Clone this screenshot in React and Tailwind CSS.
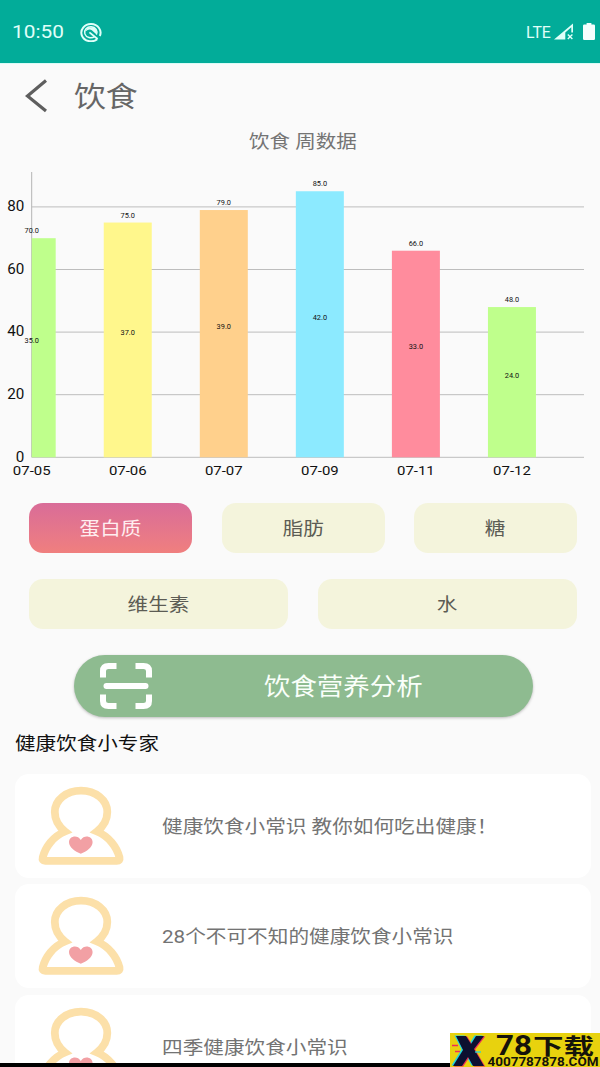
import clsx from 'clsx';

const bars = [
  { day: '07-05', total: 70, mid: 35, color: '#bfff8c' },
  { day: '07-06', total: 75, mid: 37, color: '#fff78c' },
  { day: '07-07', total: 79, mid: 39, color: '#ffd08c' },
  { day: '07-09', total: 85, mid: 42, color: '#8ceaff' },
  { day: '07-11', total: 66, mid: 33, color: '#ff8c9d' },
  { day: '07-12', total: 48, mid: 24, color: '#bfff8c' },
];

const articles = [
  '健康饮食小常识 教你如何吃出健康！',
  '28个不可不知的健康饮食小常识',
  '四季健康饮食小常识',
];

// all labels are set slightly wide
function Wide({ className, children }) {
  return (
    <span className={clsx('inline-block scale-x-[1.125] whitespace-nowrap', className)}>{children}</span>
  );
}

function StatusBar() {
  return (
    <div className="flex h-16 shrink-0 items-center border-b border-[#d9fbf6] bg-[#02ac99] pr-[5px] pl-3 text-[#e0fff9]">
      <Wide className="w-[54px] origin-left pt-0.5 text-[18.5px]">10:50</Wide>
      <svg viewBox="0 0 22 20" className="ml-[14px] h-5 w-[22px]" fill="none" stroke="currentColor">
        <path d="M17.2 17.2 A9.6 8.6 0 1 1 19.8 14" strokeWidth="2" />
        <path d="M14.6 14.6 A6.2 5.5 0 1 1 16.4 12.6" strokeWidth="1.4" />
        <path d="M5.4 9.4 A5.8 5.2 0 0 1 16.8 9.4 L16.6 12.6 L11.8 8.2 Q9 6.6 5.4 9.4 Z" fill="currentColor" stroke="none" />
        <path d="M9.4 10.4 L17.6 17" strokeWidth="1.8" />
      </svg>
      <span className="ml-auto inline-block w-[25px] origin-left scale-x-[0.99] pt-0.5 text-[16px]">LTE</span>
      <svg viewBox="0 0 20 17" className="ml-[3px] h-[17px] w-5" fill="currentColor">
        <path d="M0 16.5 L19 0.5 V9.5 H17.3 V4.2 L11.3 9.5 V16.5 Z" />
        <path d="M13.8 11.6 l4.6 4.4 M18.4 11.6 l-4.6 4.4" stroke="currentColor" strokeWidth="1.4" />
      </svg>
      <svg viewBox="0 0 12 17" className="ml-[9px] h-[17px] w-3" fill="#f4fffd">
        <path d="M3.6 0 H8.4 V1.6 H10.8 Q12 1.6 12 2.8 V15.8 Q12 17 10.8 17 H1.2 Q0 17 0 15.8 V2.8 Q0 1.6 1.2 1.6 H3.6 Z" />
      </svg>
    </div>
  );
}

function Label({ x, y, size, anchor = 'middle', children }) {
  return (
    <text transform={`translate(${x} ${y}) scale(1.1 1)`} fontSize={size} textAnchor={anchor} fill="#111">
      {children}
    </text>
  );
}

function Chart() {
  const base = 297.3;
  const unit = 3.13;

  return (
    <svg viewBox="0 0 600 330" className="h-[330px] w-[600px] shrink-0">
      <path d="M31.7 12 V297" stroke="#b4b4b4" />
      {[0, 20, 40, 60, 80].map((v) => (
        <g key={v}>
          <path d={`M31.5 ${base - v * unit} H584`} stroke="#bdbdbd" />
          <Label x={24.2} y={base - v * unit + 4.2} size={13.8} anchor="end">{v}</Label>
        </g>
      ))}
      {bars.map((b, i) => {
        const cx = 31.7 + i * 96.05;
        const left = i === 0 ? cx : cx - 24;
        const top = base - b.total * unit;
        return (
          <g key={b.day}>
            <rect x={left} y={top} width={cx + 24 - left} height={base - top} fill={b.color} />
            <Label x={cx} y={top - 5} size={6.7}>{b.total.toFixed(1)}</Label>
            <Label x={cx} y={(top + base) / 2 - 4.6} size={6.7}>{b.mid.toFixed(1)}</Label>
            <Label x={cx} y={314.6} size={13.6}>{b.day}</Label>
          </g>
        );
      })}
    </svg>
  );
}

function Nutrient({ active, children }) {
  return (
    <button
      className={clsx(
        'flex flex-1 items-center justify-center rounded-[14px] pt-0.5 text-[18.3px]',
        active ? 'bg-linear-to-b from-[#d96c98] to-[#f07f7e] text-[#ffeef0]' : 'bg-[#f4f4dc] text-[#5c5c54]'
      )}
    >
      <Wide>{children}</Wide>
    </button>
  );
}

function Person() {
  return (
    <svg viewBox="38 785 87 82" className="h-[82px] w-[87px] shrink-0">
      <path
        d="M65 831.5 C57.5 825.5 54.8 819 54.8 812 C54.8 799.8 66.5 790.6 81 790.6 S107.3 799.8 107.3 812 C107.3 819 104.5 825.5 97 831.5 C109 836.5 116.8 847 119.5 857.5 Q120.2 860.9 116.8 860.9 H45.2 Q41.8 860.9 42.7 857.5 C45.3 847 53 836.5 65 831.5 Z"
        fill="none"
        stroke="#fce0a9"
        strokeWidth="7.8"
      />
      <path
        d="M80.8 853.8 C75 851.5 69 847.5 69 842 C69 836 77.5 834 80.8 840 C84.1 834 92.6 836 92.6 842 C92.6 847.5 86.6 851.5 80.8 853.8 Z"
        fill="#f2a0a4"
      />
    </svg>
  );
}

function Watermark() {
  return (
    <div className="absolute right-0 bottom-0 flex h-[34px] w-[150px] bg-[#e8d20e] text-[#15130a]">
      <svg viewBox="0 0 36 34" className="h-[34px] w-9 shrink-0">
        <path d="M6 3 H16 L21 11 L26 3 H34 L24 16 L34 33 H23 L18 24 L12 33 H3 L13 17 Z" fill="#20d5e0" transform="translate(-1.5 -0.5)" />
        <path d="M6 3 H16 L21 11 L26 3 H34 L24 16 L34 33 H23 L18 24 L12 33 H3 L13 17 Z" fill="#ee2f55" transform="translate(1.2 0.5)" />
        <path d="M6 3 H16 L21 11 L26 3 H34 L24 16 L34 33 H23 L18 24 L12 33 H3 L13 17 Z" fill="#0c1030" />
        <path d="M2 12.5 H8 M5 18.5 H10" stroke="#ee2f55" strokeWidth="1.3" />
        <path d="M25 19 H31" stroke="#20d5e0" strokeWidth="1.3" />
      </svg>
      <svg viewBox="0 0 114 34" className="h-[34px] w-[114px]" fill="currentColor">
        <text x="10" y="22" fontSize="27" fontWeight="700" textLength="36" lengthAdjust="spacingAndGlyphs">78</text>
        <text x="47" y="20.6" fontSize="22" fontWeight="700" textLength="61" lengthAdjust="spacingAndGlyphs">下载</text>
        <text x="1.5" y="33" fontSize="13.5" fontWeight="700" fontFamily="Roboto, sans-serif" textLength="111" lengthAdjust="spacing">4007787878.COM</text>
      </svg>
    </div>
  );
}

export default function App() {
  return (
    <div className="relative flex h-[1067px] w-[600px] flex-col overflow-hidden bg-[#fafafa] font-[Roboto,'Noto_Sans_CJK_SC',sans-serif]">
      <StatusBar />

      <header className="flex h-16 shrink-0 items-center pl-[25px] text-[#666]">
        <svg viewBox="0 0 22 34" className="h-[34px] w-[22px]" fill="none" stroke="#5e5e5e" strokeWidth="3.2">
          <path d="M21 1.5 L2.5 17 L21 32" />
        </svg>
        <Wide className="ml-[27px] origin-left pt-1 text-[28.3px]">饮食</Wide>
      </header>

      <h2 className="flex h-8 shrink-0 items-center justify-center pb-1 pl-[6px] text-[18.3px] text-[#747474]">
        <Wide>饮食 周数据</Wide>
      </h2>

      <Chart />

      <section className="flex shrink-0 flex-col gap-[26px] px-[29px] pt-[12.5px] pr-[23px]">
        <div className="flex h-[50px] gap-[29.5px]">
          <Nutrient active>蛋白质</Nutrient>
          <Nutrient>脂肪</Nutrient>
          <Nutrient>糖</Nutrient>
        </div>
        <div className="flex h-[50px] gap-[29.5px]">
          <Nutrient>维生素</Nutrient>
          <Nutrient>水</Nutrient>
        </div>
      </section>

      <button className="mt-[26.5px] ml-[73.5px] flex h-[62px] w-[459.5px] shrink-0 items-center rounded-full bg-[#8ebb90] pl-[26px] text-[#fafffa] shadow-[0_1px_3px_rgba(0,0,0,0.25)]">
        <svg viewBox="0 0 52 46" className="h-[46px] w-[52px]" fill="none" stroke="white" strokeWidth="6">
          <path d="M3 14.5 V8 Q3 3 8.5 3 H16.5 M35.5 3 H43.5 Q49 3 49 8 V14.5 M49 31.5 V38 Q49 43 43.5 43 H35.5 M16.5 43 H8.5 Q3 43 3 38 V31.5" />
          <path d="M6.5 23 H45.5" strokeLinecap="round" />
        </svg>
        <Wide className="ml-[112px] origin-left pt-[3px] text-[23.5px]">饮食营养分析</Wide>
      </button>

      <h3 className="flex h-[56.5px] shrink-0 items-center pb-1 pl-[15px] text-[18.3px] text-[#111]">
        <Wide className="origin-left">健康饮食小专家</Wide>
      </h3>

      <ul className="flex shrink-0 flex-col gap-[6.5px] pr-[9px] pl-[14.5px]">
        {articles.map((title) => (
          <li key={title} className="flex h-[104px] items-center rounded-[14px] bg-white pl-[23.5px] text-[18.35px] text-[#737373]">
            <Person />
            <Wide className="ml-[37px] origin-left pt-0.5">{title}</Wide>
          </li>
        ))}
      </ul>

      <div className="absolute inset-x-0 bottom-0 h-[4.5px] bg-black" />
      <Watermark />
    </div>
  );
}
